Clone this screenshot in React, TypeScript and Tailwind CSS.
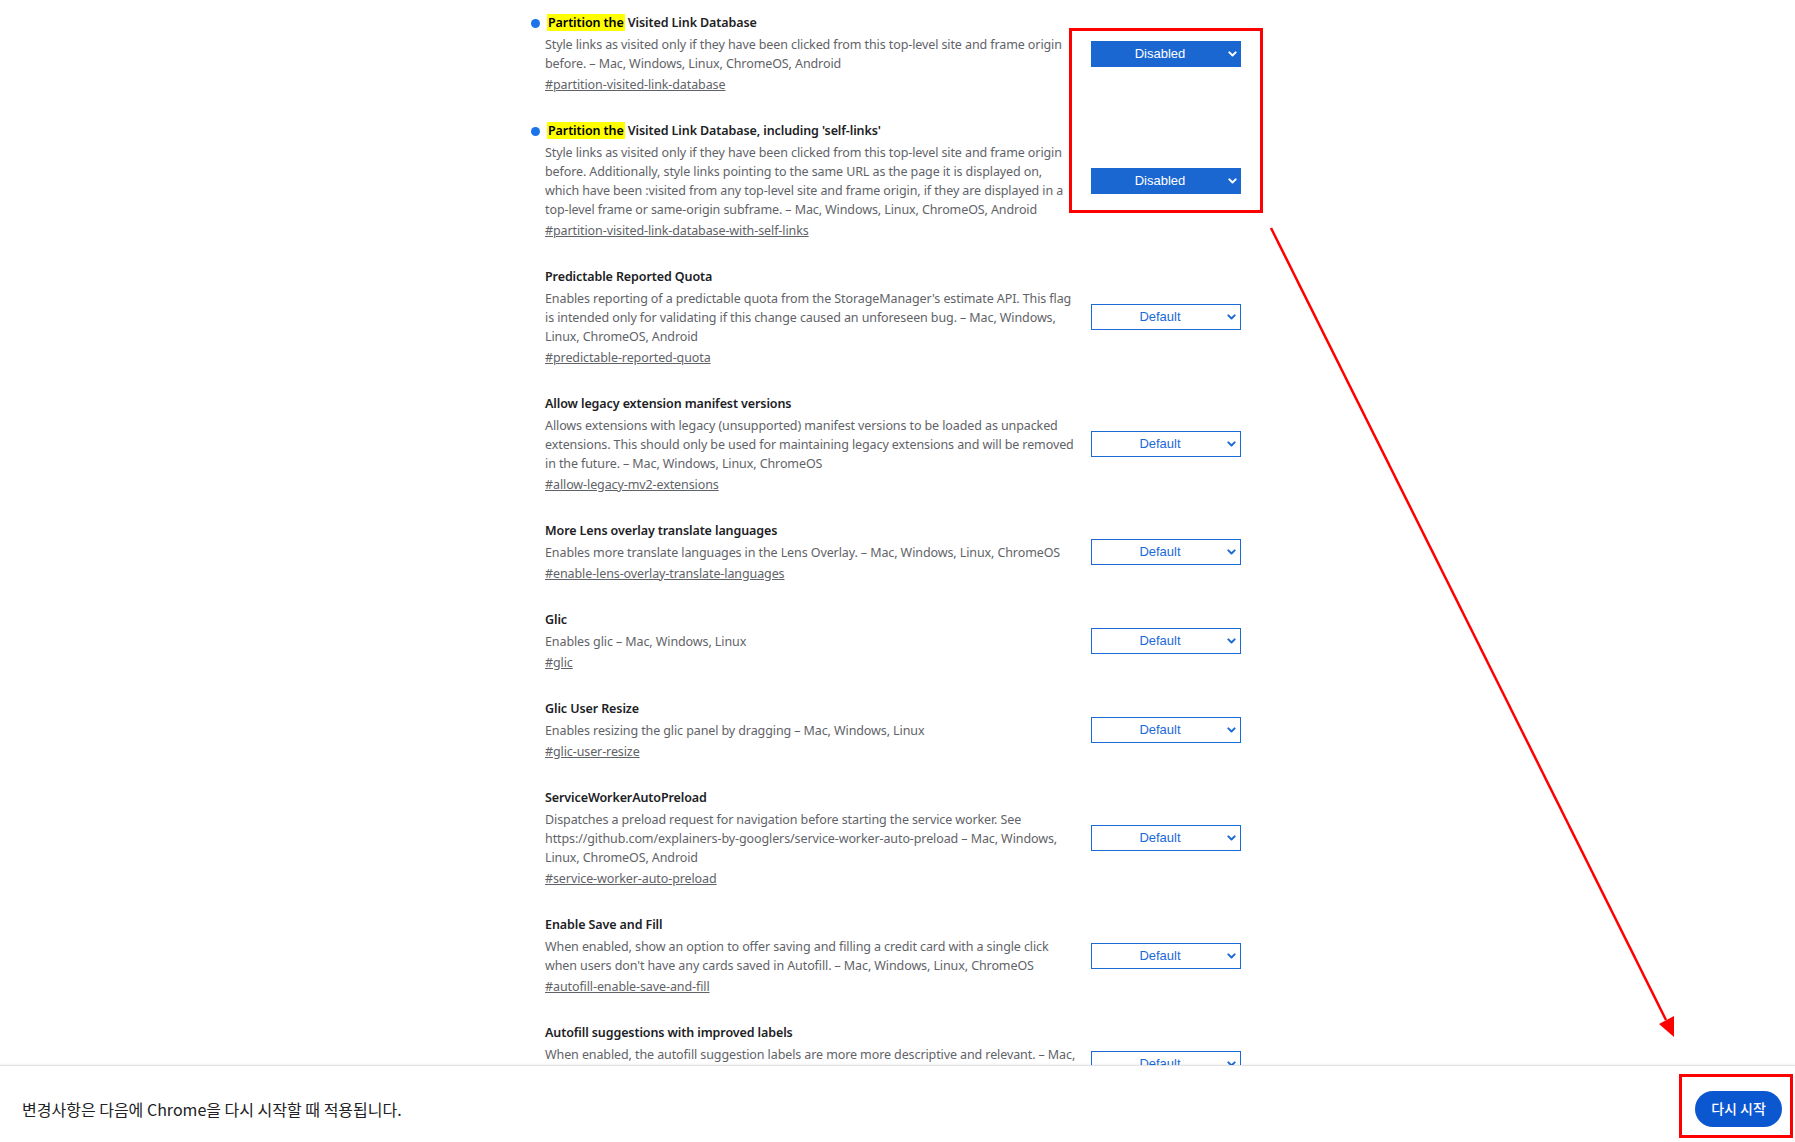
import React from "react";

type Flag = {
  title: string;
  mark?: string;
  lines: string[];
  link: string;
  value: "Default" | "Disabled";
  changed?: boolean;
};

const flags: Flag[] = [
  {
    mark: "Partition the",
    title: " Visited Link Database",
    lines: [
      "Style links as visited only if they have been clicked from this top-level site and frame origin",
      "before. – Mac, Windows, Linux, ChromeOS, Android",
    ],
    link: "#partition-visited-link-database",
    value: "Disabled",
    changed: true,
  },
  {
    mark: "Partition the",
    title: " Visited Link Database, including 'self-links'",
    lines: [
      "Style links as visited only if they have been clicked from this top-level site and frame origin",
      "before. Additionally, style links pointing to the same URL as the page it is displayed on,",
      "which have been :visited from any top-level site and frame origin, if they are displayed in a",
      "top-level frame or same-origin subframe. – Mac, Windows, Linux, ChromeOS, Android",
    ],
    link: "#partition-visited-link-database-with-self-links",
    value: "Disabled",
    changed: true,
  },
  {
    title: "Predictable Reported Quota",
    lines: [
      "Enables reporting of a predictable quota from the StorageManager's estimate API. This flag",
      "is intended only for validating if this change caused an unforeseen bug. – Mac, Windows,",
      "Linux, ChromeOS, Android",
    ],
    link: "#predictable-reported-quota",
    value: "Default",
  },
  {
    title: "Allow legacy extension manifest versions",
    lines: [
      "Allows extensions with legacy (unsupported) manifest versions to be loaded as unpacked",
      "extensions. This should only be used for maintaining legacy extensions and will be removed",
      "in the future. – Mac, Windows, Linux, ChromeOS",
    ],
    link: "#allow-legacy-mv2-extensions",
    value: "Default",
  },
  {
    title: "More Lens overlay translate languages",
    lines: ["Enables more translate languages in the Lens Overlay. – Mac, Windows, Linux, ChromeOS"],
    link: "#enable-lens-overlay-translate-languages",
    value: "Default",
  },
  {
    title: "Glic",
    lines: ["Enables glic – Mac, Windows, Linux"],
    link: "#glic",
    value: "Default",
  },
  {
    title: "Glic User Resize",
    lines: ["Enables resizing the glic panel by dragging – Mac, Windows, Linux"],
    link: "#glic-user-resize",
    value: "Default",
  },
  {
    title: "ServiceWorkerAutoPreload",
    lines: [
      "Dispatches a preload request for navigation before starting the service worker. See",
      "https://github.com/explainers-by-googlers/service-worker-auto-preload – Mac, Windows,",
      "Linux, ChromeOS, Android",
    ],
    link: "#service-worker-auto-preload",
    value: "Default",
  },
  {
    title: "Enable Save and Fill",
    lines: [
      "When enabled, show an option to offer saving and filling a credit card with a single click",
      "when users don't have any cards saved in Autofill. – Mac, Windows, Linux, ChromeOS",
    ],
    link: "#autofill-enable-save-and-fill",
    value: "Default",
  },
  {
    title: "Autofill suggestions with improved labels",
    lines: [
      "When enabled, the autofill suggestion labels are more more descriptive and relevant. – Mac,",
      "Windows, Linux, ChromeOS, Android",
    ],
    link: "#autofill-improved-labels",
    value: "Default",
  },
];

function Chevron({ className }: { className: string }) {
  return (
    <svg viewBox="0 0 10 6" className={className} fill="none">
      <path d="M1.5 1.2 5 4.6 8.5 1.2" stroke="currentColor" strokeWidth="2.2" strokeLinecap="round" strokeLinejoin="round" />
    </svg>
  );
}

function FlagSelect({ value }: { value: Flag["value"] }) {
  const active = value !== "Default";
  return (
    <div
      className={
        active
          ? "relative flex h-[26px] w-[150px] shrink-0 items-center justify-center bg-[#1a67d2] text-white"
          : "relative flex h-[26px] w-[150px] shrink-0 items-center justify-center border border-[#1a6ad8] bg-white text-[#1a6ad8]"
      }
      style={{ fontFamily: '"Liberation Sans", Arial, sans-serif' }}
    >
      <span className="pr-3 text-[13px]">{value}</span>
      <Chevron className="absolute right-[4px] h-[6px] w-[9px]" />
    </div>
  );
}

function FlagRow({ flag }: { flag: Flag }) {
  return (
    <div className="flex items-center gap-[16px]">
      <div className="relative w-[530px] text-[12.5px] tracking-[-0.1px]">
        {flag.changed && (
          <span className="absolute left-[-14px] top-[6px] h-[9px] w-[9px] rounded-full bg-[#1a73e8]" />
        )}
        <h2 className="font-semibold leading-[20px] text-[#202124]">
          {flag.mark && <mark className="ml-[2px] bg-[#ffff00] px-[1px] text-black">{flag.mark}</mark>}
          {flag.title}
        </h2>
        <p className="mt-[2px] whitespace-nowrap leading-[19px] text-[#5f6368]">
          {flag.lines.map((line, i) => (
            <React.Fragment key={i}>
              {i > 0 && <br />}
              {line}
            </React.Fragment>
          ))}
        </p>
        <a className="mt-[2px] block leading-[19px] text-[#5f6368] underline">{flag.link}</a>
      </div>
      <FlagSelect value={flag.value} />
    </div>
  );
}

export default function App() {
  return (
    <div
      className="relative h-[1142px] w-full overflow-hidden bg-white"
      style={{ fontFamily: '"Noto Sans", "Noto Sans CJK KR", sans-serif' }}
    >
      {/* flag list */}
      <div className="flex flex-col gap-[27px] pl-[545px] pt-[13px]">
        {flags.map((flag) => (
          <FlagRow key={flag.link} flag={flag} />
        ))}
      </div>

      {/* restart bar */}
      <div className="absolute bottom-0 left-0 right-0 flex h-[77px] items-center justify-between border-t border-[#e3e3e3] bg-white pl-[22px] pr-[13px] pt-[9px] shadow-[0_-1px_2px_rgba(0,0,0,0.06)]">
        <span
          className="text-[16px] text-[#202124]"
          style={{ fontFamily: '"Noto Sans CJK KR", "Noto Sans", sans-serif' }}
        >
          변경사항은 다음에 Chrome을 다시 시작할 때 적용됩니다.
        </span>
        <button
          className="h-[36px] w-[87px] rounded-full bg-[#0b57d0] text-[14px] font-medium text-white"
          style={{ fontFamily: '"Noto Sans CJK KR", sans-serif' }}
        >
          다시 시작
        </button>
      </div>

      {/* annotations */}
      <svg className="pointer-events-none absolute inset-0 h-full w-full" viewBox="0 0 1795 1142">
        <rect x="1070.5" y="29.5" width="191" height="182" fill="none" stroke="#ff0000" strokeWidth="3" />
        <rect x="1680.5" y="1075.5" width="111" height="61" fill="none" stroke="#ff0000" strokeWidth="3" />
        <line x1="1271" y1="228" x2="1666" y2="1020" stroke="#ff0000" strokeWidth="2.5" />
        <polygon points="1674,1037 1659,1024 1674,1016" fill="#ff0000" />
      </svg>
    </div>
  );
}
